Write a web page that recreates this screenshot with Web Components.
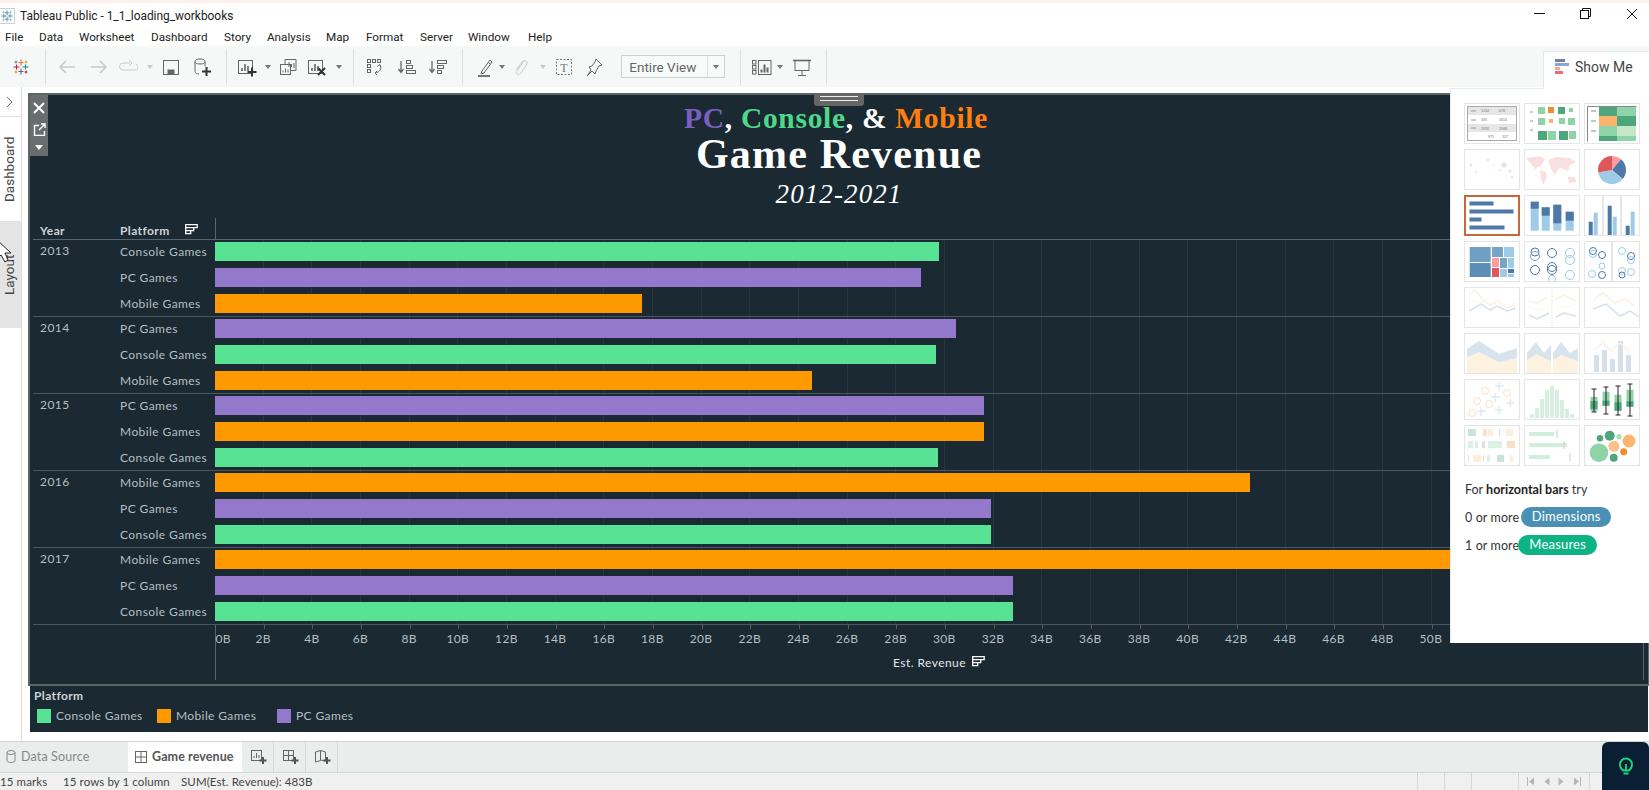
<!DOCTYPE html>
<html lang="en"><head><meta charset="utf-8"><title>Tableau Public</title>
<style>
html,body{margin:0;padding:0;background:#fff}
body{width:1649px;height:790px;overflow:hidden;position:relative;font-family:Roboto,"Liberation Sans",sans-serif}
</style></head><body>
<x-app></x-app>
<script>
const svg=(w,h,inner,vb)=>`<svg xmlns="http://www.w3.org/2000/svg" width="${w}" height="${h}" viewBox="${vb||`0 0 ${w} ${h}`}" fill="none" stroke="currentColor" stroke-width="1">${inner}</svg>`;
const bars=(x,y)=>`<path d="M${x} ${y}v-3M${x+3} ${y}v-7M${x+6} ${y}v-5" stroke-width="1.6"/>`;
const plus=(x,y)=>`<path d="M${x} ${y-4.5}v9M${x-4.5} ${y}h9" stroke="#333" stroke-width="2"/>`;
const ICONS={
logo:`<g stroke-width="1.1"><path d="M10 2.500v6M7.500 5.500h5" stroke="#e8762b"/><path d="M10 11.500v6M7.500 14.500h5" stroke="#5b6591"/><path d="M2.500 10h6M5.500 7.500v5" stroke="#c72035"/><path d="M11.500 10h6M14.500 7.500v5" stroke="#1f8a9c"/><path d="M5 3.500v3M3.500 5h3" stroke="#59879b"/><path d="M15 3.500v3M13.500 5h3" stroke="#e8a02b"/><path d="M5 13.500v3M3.500 15h3" stroke="#e8a02b"/><path d="M15 13.500v3M13.500 15h3" stroke="#c72035"/></g>`,
mono:`<g stroke-width="1.200" stroke="#3d86a8"><path d="M10 2v7M7 5.500h6M10 11v7M7 14.500h6M2 10h7M5.500 7v6M11 10h7M14.500 7v6"/><path d="M5 3v3M3.500 4.500h3M15 3v3M13.500 4.500h3M5 14v3M3.500 15.500h3M15 14v3M13.500 15.500h3" stroke="#7fb2c8"/></g>`,
back:`<path d="M18 10H3M9 4l-6 6 6 6" stroke-width="1.5"/>`,
fwd:`<path d="M2 10h15M11 4l6 6-6 6" stroke-width="1.5"/>`,
redo:`<path d="M12 6H5a3 3 0 0 0 0 7h11a3 3 0 0 0 2-6"/><path d="M11 3l3 3-3 3"/>`,
save:`<rect x="2.5" y="3.5" width="15" height="14"/><rect x="7" y="13" width="6" height="4" fill="currentColor"/>`,
newdata:`<ellipse cx="8" cy="4.5" rx="5" ry="2.5"/><path d="M3 4.5v10c0 1.5 2 2.5 4 2.5M13 4.5v5"/>${plus(14.5,14.5)}`,
newsheet:`<rect x="1.5" y="3.5" width="14" height="13"/>${bars(5,14)}${plus(15,15)}`,
dup:`<path d="M7 7V2.5h11v11h-5"/><rect x="2.5" y="7.5" width="10" height="10"/><path d="M5 15.5v-2M7.5 15.5v-4M10 15.5v-3M11 10V5M13.5 10V7M16 11V6" stroke-width="1"/>`,
clear:`<rect x="1.5" y="3.5" width="14" height="13"/>${bars(5,14)}<path d="M11 11l7 7M18 11l-7 7" stroke="#333" stroke-width="2"/>`,
swap:`<g stroke-width="1"><rect x="3.5" y="2.5" width="3" height="3"/><rect x="8.5" y="2.5" width="3" height="3"/><rect x="13.5" y="2.5" width="3" height="3"/><rect x="3.5" y="7.5" width="3" height="3"/><rect x="3.5" y="12.5" width="3" height="3"/><path d="M16 8c2 4 0 7-5 8M13 14l-2 2 2 2M17 10l-1.500-2.500-2 2"/></g>`,
sorta:`<path d="M4 4v11M1.500 12l2.500 3.500L6.500 12" stroke-width="1.300"/><rect x="9.500" y="3.500" width="4" height="3"/><rect x="9.500" y="8.500" width="6" height="3"/><rect x="9.500" y="13.500" width="9" height="3"/>`,
sortd:`<path d="M4 4v11M1.500 12l2.500 3.500L6.500 12" stroke-width="1.300"/><rect x="9.500" y="3.500" width="9" height="3"/><rect x="9.500" y="8.500" width="6" height="3"/><rect x="9.500" y="13.500" width="4" height="3"/>`,
hl:`<path d="M7 14l-1 3 3-1 8-11-2-2zM13 5l2 2"/><path d="M3 19h12" stroke-width="1.800"/>`,
clip:`<path d="M14 4L7 14c-2 3 2 5 4 2l6-9c1-3-3-5-5-2L6 13" transform="translate(-1 0)"/>`,
tbox:`<rect x="2.500" y="2.500" width="15" height="15" stroke-dasharray="2 1.500"/><text x="10" y="14.500" text-anchor="middle" font-family="Liberation Serif" font-size="12" fill="currentColor" stroke="none">T</text>`,
pin:`<path d="M12 2l6 6-3 1-3 5-1 3-3-3-5 5 4-6-2-3 3-1 3-4z"/>`,
show:`<rect x=".5" y="3.500" width="3.500" height="3.500"/><rect x=".5" y="8.500" width="3.500" height="3.500"/><rect x=".5" y="13.500" width="3.500" height="3.500"/><rect x="6.500" y="3.500" width="12.500" height="14"/><path d="M9.500 15.500v-3M12.500 15.500v-8M15.500 15.500v-5" stroke-width="2"/>`,
present:`<path d="M1 3.500h18" stroke-width="1.600"/><rect x="3" y="3.500" width="14" height="10"/><path d="M10 13.500v5M6 18.500h8"/>`
};
class Base extends HTMLElement{
  connectedCallback(){ if(!this.shadowRoot){ this.attachShadow({mode:'open'}).innerHTML=this.render(); } }
}
const reg=(n,html)=>customElements.define(n,class extends Base{render(){return typeof html==='function'?html(this):html}});

reg('x-titlebar',`<style>:host{display:flex;align-items:center;height:23px;position:relative;font:11.900px Roboto,sans-serif;color:#222}
.i{width:15px;height:16px;border:1px solid #c8d3d8;border-left:0;box-sizing:border-box;margin:2px 5px 0 0;display:flex;align-items:center;justify-content:center}
.t{margin-top:2px}.w{margin-left:auto;display:flex;color:#111;margin-top:2px}.w>*{display:block}</style>
<span class="i">${svg(14,14,ICONS.mono,'0 0 20 20')}</span><span class="t">Tableau Public - 1_1_loading_workbooks</span>
<span class="w" style="padding-right:11px">
<span style="margin-right:35px">${svg(11,11,'<path d="M0 5.500h11"/>')}</span>
<span style="margin-right:35px">${svg(11,11,'<rect x=".5" y="2.500" width="8" height="8"/><path d="M2.500 2.500v-2h8v8h-2"/>')}</span>
<span>${svg(12,12,'<path d="M1 1l10 10M11 1L1 11"/>')}</span></span>`);

const MENU=[['File',34],['Data',40],['Worksheet',72],['Dashboard',73],['Story',43],['Analysis',59],['Map',40],['Format',54],['Server',48],['Window',60],['Help',40]];
reg('x-menubar',`<style>:host{display:flex;height:20px;align-items:center;padding:2px 0 0 5px;box-sizing:border-box;font:11.700px Roboto,sans-serif;color:#222}span{flex:none}</style>`+MENU.map(m=>`<span style="width:${m[1]}px">${m[0]}</span>`).join(''));

const TB=[['logo',21,20,'#888'],['sep',44.5],['back',66.7,20,'#c6cbc9'],['fwd',99.3,20,'#c6cbc9'],['redo',128.4,20,'#c6cbc9'],['dd',149.8,0,'#c6cbc9'],['save',170.8,20,'#666'],['newdata',201.7,20,'#666'],['sep',226.3],['newsheet',246.6,20,'#666'],['dd',267.7,0,'#777'],['dup',288.4,20,'#666'],['clear',317.5,20,'#666'],['dd',338.9,0,'#777'],['sep',352.6],['swap',373.6,20,'#666'],['sorta',407,20,'#666'],['sortd',438.5,20,'#666'],['sep',462.4],['hl',484.8,20,'#666'],['dd',502.4,0,'#777'],['clip',521.6,20,'#c6cbc9'],['dd',542.7,0,'#c6cbc9'],['tbox',564.4,20,'#777'],['pin',594,20,'#666'],['combo',673.5,104],['sep',740.5],['show',762,20,'#666'],['dd',780,0,'#777'],['present',802.6,20,'#666'],['sep',826]];
function tbHtml(){let right=0,o='';for(const t of TB){
  const w=t[0]==='sep'?1:t[0]==='dd'?6:t[2];const left=t[1]-(t[0]==='sep'?0:w/2);const m=left-right;right=left+w;
  const st=`margin-left:${m}px;`;
  if(t[0]==='sep')o+=`<i class="sep" style="${st}"></i>`;
  else if(t[0]==='dd')o+=`<i class="dd" style="${st}border-top-color:${t[3]}"></i>`;
  else if(t[0]==='combo')o+=`<span class="combo" style="${st}"><span class="v">Entire View</span><span class="b"><i class="dd" style="border-top-color:#777"></i></span></span>`;
  else o+=`<span class="ic" style="${st}color:${t[3]}">${svg(20,20,ICONS[t[0]])}</span>`;
 }return o}
reg('x-toolbar',`<style>:host{display:flex;align-items:center;height:41px;background:#f5f8f6;font:13px Roboto,sans-serif}
.sep{flex:none;width:1px;height:36px;background:#dde1df}.dd{flex:none;width:0;height:0;border:3px solid transparent;border-top:4px solid #777;border-bottom:0}
.ic{flex:none;width:20px;height:20px;display:block}.ic svg{display:block}
.combo{flex:none;box-sizing:border-box;width:104px;height:23px;border:1px solid #ccd2cf;display:flex;color:#666;align-items:center;background:#f8faf9}.v{width:85px;padding-left:7px;box-sizing:border-box;font-size:13.500px;white-space:nowrap}.b{flex:1;align-self:stretch;border-left:1px solid #dde1df;display:flex;align-items:center;justify-content:center}</style>`+tbHtml());

reg('x-side',`<style>:host{display:flex;flex-direction:column;width:22px;box-sizing:border-box;border-right:1px solid #ddd;position:relative;flex:none;font:13.500px Roboto,sans-serif;color:#444;background:#fff}
.c{height:30px;border-bottom:1px solid #ddd;display:flex;align-items:center;justify-content:center;color:#666;box-sizing:border-box;padding-right:2px}
.t{writing-mode:vertical-rl;transform:rotate(180deg);display:flex;align-items:center;justify-content:center;padding-left:3px;box-sizing:border-box}
.d{height:104px}.l{height:107px;background:#e4e4e4}
.p{position:absolute;left:0;top:153px;display:block}</style>
<div class="c">${svg(7,12,'<path d="M1 1l5 5-5 5"/>')}</div><div class="t d">Dashboard</div><div class="t l">Layout</div>
<svg class="p" width="12" height="24" viewBox="0 0 12 24"><path d="M-3 0L11 13H5L8 20 5 22 1 15-3 19Z" fill="#fff" stroke="#222" stroke-width="1"/></svg>`);

/* chart */
const CLR={c:'#58e394',p:'#9478cc',m:'#ff9900'},NAME={c:'Console Games',p:'PC Games',m:'Mobile Games'},PX=24.33;
const GRID=c=>`repeating-linear-gradient(90deg,transparent 0 47.67px,${c} 47.67px 48.67px)`;
reg('x-row',h=>`<style>:host{display:flex;height:19px;align-items:center}
.n{width:101px;box-sizing:border-box;padding:0 0 1px 7px;flex:none;font:12px Lato,sans-serif;letter-spacing:.42px;color:#b6bfc4;white-space:nowrap}
.b{height:19px;background:${CLR[h.getAttribute('k')]};width:${h.getAttribute('v')*PX}px;margin-left:1px;flex:none}</style>
<span class="n">${NAME[h.getAttribute('k')]}</span><span class="b"></span>`);
reg('x-group',h=>`<style>:host{display:flex;height:77px;box-sizing:border-box;padding:2px 0 3px;border-bottom:1px solid #4b575e;background:${GRID('#263540')};background-size:calc(100% - 182px) 100%;background-position:right top;background-repeat:no-repeat;overflow:hidden}
.y{width:80px;box-sizing:border-box;padding:1px 0 0 7px;flex:none;font:12px Lato,sans-serif;letter-spacing:.42px;color:#b6bfc4}
.r{display:flex;flex-direction:column;gap:7px;flex:1;min-width:0}</style>
<span class="y">${h.getAttribute('year')}</span><div class="r"><slot></slot></div>`);
const SORTIC=svg(13,13,'<path d="M.7 .7h11.500v3H.7zM.7 3.700h8v3h-8zM.7 6.700h5v3h-5z" stroke="#fff" stroke-width="1.300"/>');
reg('x-axis',()=>{let c='';for(let i=0;i<30;i++)c+=`<span class="${i?'':'z'}">${i*2}B</span>`;
return `<style>:host{display:block;margin-left:182px;height:55px;border-left:1px solid #59646b;border-right:1px solid #59646b;position:relative;font:12px Lato,sans-serif;letter-spacing:.35px;color:#b6bfc4}
.t{height:4px;background:${GRID('#56626a')}}
.l{display:flex;margin-left:-25.800px;margin-top:2px;white-space:nowrap;width:1460px;overflow:hidden}.l span{flex:none;width:48.670px;text-align:center}.l .z{text-align:right;padding-right:8px;box-sizing:border-box}
.e{display:flex;align-items:center;margin:9px 0 0 677px;gap:6px;color:#e4e8ea;letter-spacing:.45px}</style>
<div class="t"></div><div class="l">${c}</div><div class="e"><span>Est. Revenue</span>${SORTIC}</div>`});
reg('x-header',`<style>:host{display:flex;height:22px;box-sizing:border-box;border-bottom:1px solid #59646b;font:bold 12px Lato,sans-serif;letter-spacing:.4px;color:#cdd4d8;align-items:center;padding-top:3px}
.y{width:80px;padding-left:7px;box-sizing:border-box}.p{width:101px;padding-left:7px;box-sizing:border-box;display:flex;align-items:center;gap:15px}.a{align-self:stretch;margin-top:-3px;border-left:1px solid #59646b;margin-left:1px}</style>
<span class="y">Year</span><span class="p"><span>Platform</span>${SORTIC}</span><span class="a"></span>`);
reg('x-title',`<style>:host{display:block;height:123px;text-align:center;font-family:"Liberation Serif",serif;color:#fff;box-sizing:border-box;padding-top:5px}
div{white-space:nowrap}.a{font:bold 29.500px/36px "Liberation Serif",serif;letter-spacing:.7px;padding-right:6px}.b{font:bold 42px/44px "Liberation Serif",serif;letter-spacing:1.200px;margin-top:-4px}.c{font:italic 27px/32px "Liberation Serif",serif;letter-spacing:1.100px;margin-top:2px}</style>
<div class="a"><span style="color:#7b5fc0">PC</span>, <span style="color:#4ed98a">Console</span>, &amp; <span style="color:#ff7f0e">Mobile</span></div><div class="b">Game Revenue</div><div class="c">2012-2021</div>`);
reg('x-viz',`<style>:host{display:block;flex:none;width:1621px;height:593px;box-sizing:border-box;border:2px solid #5d6666;border-right-width:1px;background:#1a2932;position:relative}
.c{display:block;box-sizing:border-box;padding:0 4px 0 3px}
.tools{position:absolute;left:0;top:0;width:18px;height:61px;background:#686e6e;display:flex;flex-direction:column;align-items:center;color:#fff;justify-content:space-around;padding:2px 0;box-sizing:border-box}
.grip{position:absolute;left:784px;top:-2px;width:50px;height:13px;background:#666;border-radius:0 0 3px 3px;display:flex;flex-direction:column;gap:3px;align-items:center;padding-top:3px;box-sizing:border-box}.grip i{display:block;width:38px;height:1px;background:#eee}</style>
<x-title></x-title><div class="c"><x-header></x-header><slot></slot><x-axis></x-axis></div>
<div class="tools">${svg(12,12,'<path d="M1 1l10 10M11 1L1 11" stroke-width="2"/>')}${svg(13,13,'<path d="M6 2.500H1.500v10h10V8M8 1h4v4M12 1L6 7" stroke-width="1.400"/>')}<i style="width:0;height:0;border:4px solid transparent;border-top:5px solid #fff;border-bottom:0"></i></div>
<div class="grip"><i></i><i></i></div>`);
reg('x-legend',`<style>:host{display:block;height:46px;margin-left:2px;width:1618px;background:#1a2932;font:12px Lato,sans-serif;letter-spacing:.38px;color:#b6bfc4;box-sizing:border-box;padding:2px 0 0 4px}
.h{font-weight:bold;color:#cdd4d8;height:20px}.r{display:flex;padding-left:3px}.i{display:flex;align-items:center;width:120px;gap:5px}.s{width:14px;height:14px}</style>
<div class="h">Platform</div><div class="r"><span class="i"><span class="s" style="background:#58e394"></span>Console Games</span><span class="i"><span class="s" style="background:#ff9900"></span>Mobile Games</span><span class="i"><span class="s" style="background:#9478cc"></span>PC Games</span></div>`);

/* thumbs */
const R=(x,y,w,h,f)=>`<rect x="${x}" y="${y}" width="${w}" height="${h}" fill="${f}" stroke="none"/>`;
const C=(x,y,r,f)=>`<circle cx="${x}" cy="${y}" r="${r}" fill="${f}" stroke="none"/>`;
const O=(x,y,r,s)=>`<circle cx="${x}" cy="${y}" r="${r}" fill="none" stroke="${s}" stroke-width="1"/>`;
const L=(d,s,w)=>`<path d="${d}" fill="none" stroke="${s}" stroke-width="${w||1}"/>`;
const F=(d,f)=>`<path d="${d}" fill="${f}" stroke="none"/>`;
const T=(x,y,s)=>`<text x="${x}" y="${y}" font-size="3.500" font-family="Lato" fill="#777" stroke="none">${s}</text>`;
const DK='#4e79a7',LT='#a0cbe8',G1='#4ea67c',G2='#8fd3a8',OR='#fbb56b';
const TH=[
R(4,4,48,8,'#e6e6e6')+R(4,21,48,8,'#e6e6e6')+`<rect x="3.500" y="3.500" width="49" height="34" fill="none" stroke="#aaa"/>`+L('M7 8h5M7 17h5M7 25h5','#999')+T(17,9,'1234')+T(35,9,'678')+T(17,18,'345')+T(35,18,'3014')+T(17,27,'2920')+T(35,27,'2508')+T(24,35,'971')+T(38,35,'327'),
L('M6 9h3M6 18h3M6 27h3','#999')+R(14,4,7,7,G2)+R(24,4,6,6,'#f28e2b')+R(34,4,7,7,G1)+R(45,5,4,4,G2)+R(14,15,7,7,G2)+R(25,16,4,4,OR)+R(35,15,6,6,G2)+R(44,15,7,7,G2)+R(14,28,9,9,G1)+R(24,28,8,9,G2)+R(35,28,9,9,G1)+R(45,28,7,8,G2),
R(15,3,18,10,G1)+R(33,3,19,10,G2)+R(15,13,18,10,OR)+R(33,13,19,10,G1)+R(15,23,18,10,G2)+R(33,23,19,10,'#c6e8c8')+R(15,33,18,5,G1)+R(33,33,19,5,G2)+L('M3.500 3.500h49M3.500 3.500v35M7 8h5M7 18h5M7 28h5','#888'),
`<g opacity=".3">`+C(7,16,1.5,'#e08a8a')+C(12,23,1,'#e08a8a')+C(24,11,1.5,'#e08a8a')+C(40,16,2.5,'#e08a8a')+C(30,16,1.2,'#d8e8d0')+C(46,22,1.5,'#e08a8a')+C(48,28,1.2,'#e08a8a')+C(27,25,1,'#d8e8d0')+C(36,21,1,'#e08a8a')+`</g>`,
`<g opacity=".3">`+F('M2 9l14-2 5 3-4 7-4 1-1 3-5-6zM16 21l6 2 1 5-4 8-2-7z','#e99')+F('M24 11l8-3 14 1 6 4-6 3-2 6-7-3-3 1-3 6-4-6z','#e99')+F('M44 28l7 0 1 5-7 1z','#e99')+`</g>`,
F('M28 21L28 7A14 14 0 0 1 37 10.300Z','#ff9d9a')+F('M28 21L37 10.300A14 14 0 0 1 38.700 30Z',DK)+F('M28 21L38.700 30A14 14 0 0 1 14.200 23.400Z',LT)+F('M28 21L14.200 23.400A14 14 0 0 1 28 7Z','#e15759'),
R(5.500,6.500,24,4,DK)+R(5.500,14.500,44,4,DK)+R(5.500,22.500,12,4,DK)+R(5.500,30.500,35,4,DK),
R(6.700,6.700,8,29,LT)+R(6.700,6.700,8,7,DK)+R(17.700,12.300,8,23.400,LT)+R(17.700,12.300,8,8.400,DK)+R(29.300,9.700,8,26,LT)+R(29.300,9.700,8,18.600,DK)+R(41.700,16.700,8,19,LT)+R(41.700,16.700,8,9,DK),
L('M19 1v39M37 1v39','#ccc')+R(4.700,26.700,4,13.300,DK)+R(9.700,17.700,4,22.300,LT)+R(23.700,10.700,4,29.300,DK)+R(28.700,21.700,4,18.300,LT)+R(41.700,30.700,4,9.300,DK)+R(46.700,16.700,4,23.300,LT),
R(5.700,6,21,15,'#6f9fc4')+R(5.700,22,21,14,'#5b8db8')+R(28,6,11,10,'#77a3c4')+R(40,6,10,10,LT)+R(28,17,7,9,'#ff9d9a')+R(36,17,7,10,'#76a5c2')+R(44,17,6,10,LT)+R(28,27,7,9,'#e15759')+R(36,28,7,8,LT)+R(44,28,6,4,DK)+R(44,33,6,3,LT),
O(11,11,4,DK)+O(11,15,4.500,'#7a9cc0')+O(11,29,4.500,DK)+O(28,12,4.500,DK)+O(28,26,4.500,DK)+O(28,29,4.500,DK)+O(28,38,3.500,LT)+O(46,12,4.500,LT)+O(46,19,4.500,LT)+O(46,34,4.500,LT),
L('M28 1v39','#ccc')+O(9,10,3.500,DK)+O(9,13,3.500,LT)+O(18,14,3.500,DK)+O(18,25,3,LT)+O(8,33,3.500,LT)+O(18,34,3.500,DK)+O(38,10,3.500,LT)+O(47,15,3.500,DK)+O(47,19,3.500,LT)+O(38,30,3.500,LT)+O(38,34,3,DK)+O(47,31,3.500,LT),
`<g opacity=".3">`+L('M5 8l6-5 8 10 7 5 8-4 8 7 9-3','#f5cfa0',1.500)+L('M5 24l12-7 9 6 7-4 10 5 9-3','#7a9cc0',1.500)+L('M5 11l8 4 10 0 10 2 10 1 9-2','#f9e4c8')+`</g>`,
`<g opacity=".3">`+L('M28 1v39','#ccc')+L('M5 14l8 2 10-6M32 12l8-4 12 6','#f5cfa0',1.500)+L('M5 28l8 4 12-6M32 30l8-4 12 3','#7a9cc0',1.500)+L('M5 20l8 4 12-3M32 20l8 0 12-3','#f9e4c8')+`</g>`,
`<g opacity=".3">`+L('M9 13l10-7 12 10 10-4 9 7','#f5cfa0',1.500)+L('M9 22l13-5 14 12 10-5 9 6','#7a9cc0',1.500)+`</g>`,
`<g opacity=".35">`+F('M3 16l12-8 20 13 18-6v25H3z','#8fb2cc')+F('M3 24l12-5 20 10 18-4v15H3z','#fbd9a5')+`</g>`,
`<g opacity=".35">`+F('M3 20l9-11 8 11 7-8v28H3z','#8fb2cc')+F('M29 20l8-11 9 11 8-5v25H29z','#8fb2cc')+F('M3 27l9-6 15 7v12H3zM29 27l8-5 17 6v12H29z','#fbd9a5')+`</g>`,
`<g opacity=".3">`+R(10,22,5,17,'#7a9cc0')+R(18,17,5,22,'#7a9cc0')+R(26,26,5,13,'#7a9cc0')+R(34,8,5,31,'#7a9cc0')+R(42,22,5,17,'#7a9cc0')+L('M10 17l9-7 8 8 9-8 10 9','#f5cfa0',1.500)+`</g>`,
`<g opacity=".3" stroke="none">`+O(8,34,3.500,'#f09a50')+O(21,12,3.500,'#f09a50')+O(13,22,3.500,'#f09a50')+O(25,25,3.500,'#f09a50')+O(43,14,3.500,'#f09a50')+L('M35 3v9M31 7h9M31 14v9M27 18h9M17 28v9M13 32h9M35 27v8M31 31h8M46 20v8M42 24h8','#6f9fc4')+`</g>`,
`<g opacity=".35">`+R(6,35,4,4,G2)+R(11,29,4,10,G2)+R(16,20,4,19,G2)+R(21,11,4,28,G2)+R(26,7,4,32,G2)+R(31,11,4,28,G2)+R(36,21,4,18,G2)+R(41,30,4,9,G2)+R(46,35,4,4,G2)+`</g>`,
R(6.500,18,7,14,G2)+R(6.500,22,7,8,G1)+L('M10 10v23M7.500 10h5M7.500 33h5','#222')+R(18.500,12.700,7,14,G2)+R(18.500,21.700,7,5,G1)+L('M22 8v27M19.500 8h5M19.500 35h5','#222')+R(30.500,15.700,7,16,G2)+R(30.500,23.300,7,8.400,G1)+L('M34 7v29M31.500 7h5M31.500 36h5','#222')+R(42.500,10.700,7,17,G2)+R(42.500,22.300,7,5.400,G1)+L('M46 5v32M43.500 5h5M43.500 37h5','#222'),
`<g opacity=".3">`+R(4,4,8,7,G1)+R(19,4,4,7,'#f09a50')+R(24,4,5,7,'#fbc58f')+R(35,4,1,7,'#999')+R(42,4,7,7,'#fbc58f')+R(4,16,5,7,G2)+R(11,16,3,7,G2)+R(18,16,3,7,'#999')+R(24,16,14,7,G2)+R(43,16,8,7,'#f09a50')+R(4,30,1,7,'#999')+R(9,30,8,7,'#fbc58f')+R(19,30,1,7,'#c77')+R(23,30,3,7,G2)+R(33,30,7,7,G1)+R(46,30,3,7,'#fbc58f')+`</g>`,
`<g opacity=".4">`+R(5,7,25,4,G2)+R(5,18,38,4,G2)+R(5,30,21,4,G2)+L('M33 5v8M40 16v8M46 28v8','#888')+`</g>`,
C(15,27.700,9.300,G2)+C(25.700,10.700,5,G1)+C(16,13.300,3.300,G1)+C(35,11.700,2.700,'#a9e0b5')+C(45,16,6.500,'#fdb56f')+C(30,21.300,5.500,'#fdc08a')+C(39.700,26.700,3.500,'#f28e2b')+C(29.700,32.700,4,G1)
];
reg('x-thumb',h=>{const i=+h.getAttribute('i'),s=i===6;return `<style>:host{display:block;width:56px;height:41px;box-sizing:border-box;position:relative}
svg{display:block;box-sizing:border-box}.f{position:absolute;inset:0;box-sizing:border-box;border:${s?'2px solid #c8683a':'1px solid #e4e6e6'}}</style>
${svg(56,41,TH[i])}<div class="f"></div>`});
reg('x-showme',`<style>:host{display:block;position:absolute;left:1450px;top:51px;width:199px;height:592px;font:12.500px Lato,sans-serif;color:#333}
.tab{position:absolute;left:93px;top:0;width:106px;height:38px;box-sizing:border-box;background:#fff;border-left:1px solid #e6e8e7;border-top:1px solid #e6e8e7;display:flex;align-items:center;padding:0 0 8px 11px;gap:6px;font:14px Roboto,sans-serif;color:#444}
.p{position:absolute;left:0;top:37px;width:199px;height:555px;box-sizing:border-box;background:#fff;border-left:1px solid #e6ecea;border-top:1px solid #e6ecea;padding:14px 0 0 13px}
.g{display:grid;grid-template-columns:repeat(3,56px);column-gap:4px;row-gap:5px}
.x{margin:16px 0 0 1px;height:16px;line-height:16px}.x b{color:#222}
.l{display:flex;align-items:center;height:20px;white-space:nowrap;margin:9px 0 0 1px}
.o{padding-top:0;letter-spacing:.1px}.pl{color:#fff;font-size:13px;height:20px;line-height:19px;border-radius:10px;text-align:center;letter-spacing:.2px}</style>
<div class="p"><div class="g">${TH.map((_,i)=>`<x-thumb i="${i}"></x-thumb>`).join('')}</div>
<div class="x">For <b>horizontal bars</b> try</div>
<div class="l"><span class="o" style="margin-right:2px">0 or more</span><span class="pl" style="background:#4a90b4;width:90px">Dimensions</span></div>
<div class="l" style="margin-top:8px"><span class="o" style="margin-right:-1px">1 or more</span><span class="pl" style="background:#0db384;width:79px">Measures</span></div></div>
<div class="tab">${svg(14,16,'<path d="M0 1.500h10" stroke="#7b7ba3" stroke-width="3"/><path d="M0 5.500h14" stroke="#82a9d9" stroke-width="3"/><path d="M0 9.500h5" stroke="#f3a78c" stroke-width="3"/><path d="M0 13.500h8" stroke="#ee6a7c" stroke-width="3"/>')}<span>Show Me</span></div>`);

const TABIC={ds:svg(10,13,'<ellipse cx="5" cy="2.500" rx="4" ry="2"/><path d="M1 2.500v8c0 1 1.500 2 4 2s4-1 4-2v-8"/>'),
 grid:svg(12,12,'<rect x=".5" y=".5" width="11" height="11"/><path d="M6 .5v11M.5 6h11"/>'),
 a:svg(18,16,'<rect x="1.500" y="1.500" width="10" height="10"/><path d="M4 9V7M6.500 9V4M9 9V6"/><path d="M13 8v7M9.500 11.500h7" stroke="#555" stroke-width="2"/>'),
 b:svg(18,16,'<rect x="1.500" y="1.500" width="10" height="10"/><path d="M6.500 1.500v10M1.500 6.500h10"/><path d="M13 8v7M9.500 11.500h7" stroke="#555" stroke-width="2"/>'),
 c:svg(18,16,'<path d="M1.500 3l5-1.500v10l-5 1.500zM6.500 1.500l5 1.500v9l-5-1"/><path d="M13 8v7M9.500 11.500h7" stroke="#555" stroke-width="2"/>')};
reg('x-tabs',`<style>:host{display:flex;height:31px;box-sizing:border-box;border-top:1px solid #cfd3d1;background:#e9edeb;font:12.500px Lato,sans-serif;color:#777}
.d{width:128px;display:flex;align-items:center;padding:0 0 1px 6px;gap:5px;box-sizing:border-box;color:#888;letter-spacing:.15px}
.a{width:114px;background:#fff;display:flex;align-items:center;gap:5px;padding:0 0 1px 7px;box-sizing:border-box;font-weight:bold;color:#555;letter-spacing:.1px}
.n{width:32px;box-sizing:border-box;border-right:1px solid #d5d9d7;display:flex;align-items:center;justify-content:center;color:#666;padding-left:3px}</style>
<div class="d">${TABIC.ds}<span>Data Source</span></div><div class="a"><span style="display:flex;color:#666">${TABIC.grid}</span><span>Game revenue</span></div>
<div class="n">${TABIC.a}</div><div class="n">${TABIC.b}</div><div class="n">${TABIC.c}</div>`);
reg('x-status',`<style>:host{display:flex;height:18px;box-sizing:border-box;border-top:1px solid #d5d5d5;background:#f0f0f0;font:11.500px Lato,sans-serif;color:#444;align-items:center;white-space:nowrap;letter-spacing:.1px}
.s{flex:none}.r{margin-left:auto;display:flex;align-self:stretch;padding-right:59px}.c{border-left:1px solid #d5d5d5;box-sizing:border-box}.nav{width:71px;display:flex;align-items:center;justify-content:space-around;padding:0 4px;color:#b5b5b5;font-size:0}
.nav svg{display:block}</style>
<span class="s" style="width:63px">15 marks</span><span class="s" style="width:118px">15 rows by 1 column</span><span class="s">SUM(Est. Revenue): 483B</span>
<div class="r"><span class="c" style="width:27px"></span><span class="c" style="width:27px"></span><span class="c" style="width:47px"></span>
<span class="c nav">${svg(8,9,'<path d="M.5 0v9" stroke-width="1"/><path d="M7 .5v8L2 4.500z" fill="currentColor" stroke="none"/>')}${svg(6,9,'<path d="M5.500 .5v8L.5 4.500z" fill="currentColor" stroke="none"/>')}${svg(6,9,'<path d="M.5 .5v8l5-4z" fill="currentColor" stroke="none"/>')}${svg(8,9,'<path d="M7.500 0v9" stroke-width="1"/><path d="M1 .5v8l5-4z" fill="currentColor" stroke="none"/>')}</span><span class="c" style="width:1px"></span></div>`);
reg('x-bulb',`<style>:host{display:flex;position:absolute;left:1602px;top:742px;width:47px;height:48px;background:#0a1f33;border-radius:6px 6px 0 0;align-items:center;justify-content:center}</style>
${svg(14,18,'<path d="M4 13.500C2 12 1 10 1 7.500a6 6 0 0 1 12 0c0 2.500-1 4.500-3 6zM7 13V7M4.500 16.500h5" stroke="#1fd67a" stroke-width="1.800"/>')}`);

const D=[['2013',[['c',29.76],['p',29.02],['m',17.53]]],['2014',[['p',30.45],['c',29.63],['m',24.54]]],['2015',[['p',31.6],['m',31.6],['c',29.7]]],['2016',[['m',42.54],['p',31.9],['c',31.9]]],['2017',[['m',54],['p',32.8],['c',32.8]]]];
reg('x-app',`<style>:host{display:flex;flex-direction:column;width:1649px;height:790px;position:relative;background:#fff}
.stripe{height:3px;background:#fdf3ec}.m{display:flex;height:654px}.v{margin-left:6px;padding-top:6px;width:1621px}</style>
<div class="stripe"></div><x-titlebar></x-titlebar><x-menubar></x-menubar><x-toolbar></x-toolbar>
<div class="m"><x-side></x-side><div class="v"><x-viz>${D.map(g=>`<x-group year="${g[0]}">${g[1].map(r=>`<x-row k="${r[0]}" v="${r[1]}"></x-row>`).join('')}</x-group>`).join('')}</x-viz><x-legend></x-legend></div></div>
<x-tabs></x-tabs><x-status></x-status><x-showme></x-showme><x-bulb></x-bulb>`);
</script>
</body></html>
